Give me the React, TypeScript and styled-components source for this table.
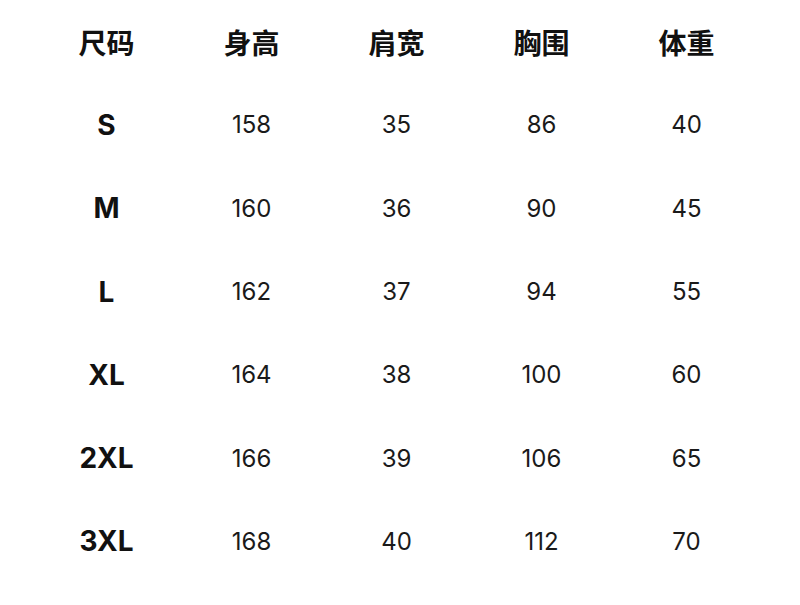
import React from 'react'
import styled, { createGlobalStyle } from 'styled-components'

const GlobalStyle = createGlobalStyle`
  html, body {
    margin: 0;
    padding: 0;
    background: #ffffff;
  }
  body {
    font-family: Inter, "Noto Sans CJK SC", sans-serif;
    color: #111111;
  }
`

const Page = styled.div`
  width: 800px;
  height: 605px;
  background: #ffffff;
  overflow: hidden;
`

const Table = styled.div`
  display: grid;
  grid-template-columns: repeat(5, 145px);
  grid-auto-rows: 83.3px;
  margin-left: 34px;
`

const HeadCell = styled.div`
  display: flex;
  align-items: center;
  justify-content: center;
  font-family: "Noto Sans CJK SC", sans-serif;
  font-size: 28px;
  font-weight: 700;
  color: #111111;
`

const SizeCell = styled.div`
  display: flex;
  align-items: center;
  justify-content: center;
  font-family: Inter, "Liberation Sans", sans-serif;
  font-size: 28px;
  font-weight: 700;
  color: #111111;
`

const ValueCell = styled.div`
  display: flex;
  align-items: center;
  justify-content: center;
  font-family: Inter, "Liberation Sans", sans-serif;
  font-size: 24px;
  font-weight: 400;
  color: #1a1a1a;
`

const headers = ['尺码', '身高', '肩宽', '胸围', '体重']

const rows = [
  { size: 'S', values: [158, 35, 86, 40] },
  { size: 'M', values: [160, 36, 90, 45] },
  { size: 'L', values: [162, 37, 94, 55] },
  { size: 'XL', values: [164, 38, 100, 60] },
  { size: '2XL', values: [166, 39, 106, 65] },
  { size: '3XL', values: [168, 40, 112, 70] }
]

const App: React.FC = () => {
  return (
    <Page>
      <GlobalStyle />
      <Table>
        {headers.map((h) => (
          <HeadCell key={h}>{h}</HeadCell>
        ))}
        {rows.map((row) => (
          <React.Fragment key={row.size}>
            <SizeCell>{row.size}</SizeCell>
            {row.values.map((v, i) => (
              <ValueCell key={i}>{v}</ValueCell>
            ))}
          </React.Fragment>
        ))}
      </Table>
    </Page>
  )
}

export default App
